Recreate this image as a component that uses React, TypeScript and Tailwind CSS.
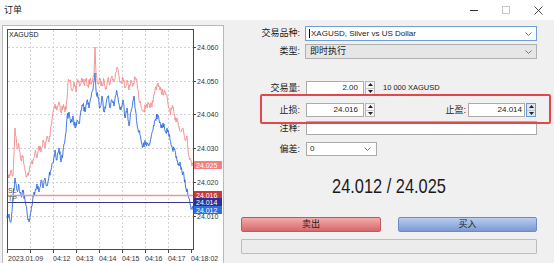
import React from "react";

const FONT = "font-['Liberation_Sans','Noto_Sans_CJK_SC',sans-serif]";

function rng(seed: number) {
  let s = seed;
  return () => {
    s = (s * 16807) % 2147483647;
    return (s - 1) / 2147483646;
  };
}

function jagged(keys: number[][], seed: number, amp: number) {
  const r = rng(seed);
  let d = `M${keys[0][0]},${keys[0][1]}`;
  for (let i = 1; i < keys.length; i++) {
    const [x0, y0] = keys[i - 1];
    const [x1, y1] = keys[i];
    const steps = Math.max(1, Math.round((x1 - x0) * 2));
    for (let s = 1; s <= steps; s++) {
      const t = s / steps;
      const x = x0 + (x1 - x0) * t;
      const y = y0 + (y1 - y0) * t + (s < steps ? (r() - 0.5) * amp : 0);
      d += ` L${x.toFixed(1)},${y.toFixed(1)}`;
    }
  }
  return d;
}

const RED: number[][] = [
  [7, 172], [9, 178], [11, 170], [13, 176], [15, 128], [17, 148], [19, 146], [21, 160], [23, 156], [25, 170],
  [27, 176], [29, 172], [31, 164], [33, 160], [35, 152], [37, 158], [39, 146], [41, 152], [43, 140], [45, 148],
  [47, 136], [49, 142], [51, 126], [53, 112], [55, 104], [57, 110], [59, 102], [61, 112], [63, 106], [65, 112],
  [67, 100], [68, 82], [70, 80], [72, 90], [74, 82], [76, 92], [78, 80], [80, 86], [82, 78], [84, 84], [86, 80],
  [88, 86], [90, 80], [92, 82], [94, 76], [95, 47], [96, 74], [98, 84], [100, 80], [102, 86], [104, 80], [106, 88],
  [108, 78], [110, 84], [112, 76], [114, 82], [116, 72], [117, 67], [119, 76], [121, 82], [123, 78], [125, 88],
  [127, 80], [129, 90], [131, 80], [133, 86], [135, 78], [137, 82], [139, 100], [141, 106], [144, 110], [147, 104],
  [150, 108], [153, 102], [155, 90], [158, 83], [160, 90], [163, 92], [166, 94], [168, 104], [170, 112], [173, 108],
  [175, 120], [177, 118], [179, 126], [181, 132], [183, 128], [185, 140], [187, 136], [188, 150], [190, 158], [193, 165],
];

const BLUE: number[][] = [
  [7, 218], [9, 214], [11, 222], [13, 196], [15, 178], [17, 190], [19, 186], [21, 195], [23, 192], [25, 200],
  [27, 212], [29, 222], [31, 212], [33, 196], [35, 192], [37, 184], [39, 192], [41, 180], [43, 188], [45, 178],
  [47, 186], [49, 176], [51, 170], [53, 162], [55, 150], [57, 160], [59, 148], [61, 162], [63, 152], [65, 140],
  [67, 118], [69, 112], [71, 122], [73, 116], [75, 128], [77, 120], [79, 124], [81, 110], [83, 104], [85, 112],
  [87, 100], [89, 108], [91, 98], [93, 90], [94, 82], [95, 73], [96, 90], [98, 98], [100, 108], [102, 96],
  [104, 112], [106, 104], [108, 96], [110, 108], [112, 100], [114, 106], [116, 95], [117, 92], [119, 104],
  [121, 110], [123, 100], [125, 118], [127, 108], [129, 126], [131, 112], [133, 100], [134, 96], [135, 108],
  [137, 124], [139, 132], [141, 140], [143, 146], [146, 142], [149, 146], [151, 138], [153, 130], [155, 120],
  [158, 115], [160, 122], [162, 128], [164, 124], [166, 132], [168, 130], [170, 140], [172, 146], [174, 150],
  [176, 158], [178, 165], [180, 162], [182, 172], [184, 176], [186, 188], [188, 196], [190, 204], [192, 208], [193, 210],
];

const LEVELS: [number, string][] = [
  [47, "24.060"],
  [81, "24.050"],
  [114, "24.040"],
  [148, "24.030"],
  [182, "24.020"],
  [216, "24.010"],
];

const VGRID = [30, 53, 76, 99, 122, 145, 168];

const TIMES: [number, string][] = [
  [8, "2023.01.09"],
  [53, "04:12"],
  [76, "04:13"],
  [99, "04:14"],
  [122, "04:15"],
  [145, "04:16"],
  [168, "04:17"],
  [191, "04:18:02"],
];

const TAGS: { y: number; v: string; bg: string }[] = [
  { y: 165, v: "24.025", bg: "#f47f7f" },
  { y: 195, v: "24.016", bg: "#c53b3b" },
  { y: 202, v: "24.014", bg: "#2e2e94" },
  { y: 210, v: "24.012", bg: "#2d6fe3" },
];

function Chart() {
  const red = jagged(RED, 7, 7);
  const blue = jagged(BLUE, 13, 7);
  return (
    <svg width={220} height={243} viewBox="3 26 220 243" className="block">
      {LEVELS.map(([y]) => (
        <line key={`h${y}`} x1={8} x2={193} y1={y + 0.5} y2={y + 0.5} stroke="#d2d2d2" strokeDasharray="2 2" />
      ))}
      {VGRID.map((x) => (
        <line key={`v${x}`} x1={x + 0.5} x2={x + 0.5} y1={30} y2={249} stroke="#d2d2d2" strokeDasharray="2 2" />
      ))}
      <path d={red} fill="none" stroke="#f28a8a" strokeWidth={0.9} strokeLinejoin="miter" />
      <path d={blue} fill="none" stroke="#2d6be0" strokeWidth={0.9} strokeLinejoin="miter" />
      <line x1={8} x2={193} y1={195.5} y2={195.5} stroke="#e39a9a" strokeWidth={1.4} />
      <line x1={8} x2={193} y1={202.5} y2={202.5} stroke="#35358c" strokeWidth={1} />
      <text x={8} y={190} fontSize={7} fill="#555" dominantBaseline="central">SL</text>
      <text x={8} y={198} fontSize={7} fill="#555" dominantBaseline="central">TP</text>
      <rect x={7.5} y={29.5} width={186} height={220} fill="none" stroke="#4a4a4a" />
      <text x={9} y={34} fontSize={7} fill="#222" dominantBaseline="central">XAGUSD</text>
      {LEVELS.map(([y, v]) => (
        <g key={`l${y}`}>
          <line x1={193} x2={196} y1={y + 0.5} y2={y + 0.5} stroke="#4a4a4a" />
          <text x={197} y={y + 0.5} fontSize={7} fill="#333" dominantBaseline="central">{v}</text>
        </g>
      ))}
      {TAGS.map((t) => (
        <g key={t.v}>
          <rect x={194} y={t.y - 4} width={28} height={8} fill={t.bg} />
          <text x={196} y={t.y + 0.3} fontSize={7} fill="#ffffff" dominantBaseline="central">{t.v}</text>
        </g>
      ))}
      {[7, ...VGRID, 191].map((x) => (
        <line key={`t${x}`} x1={x + 0.5} x2={x + 0.5} y1={250} y2={253} stroke="#4a4a4a" />
      ))}
      {TIMES.map(([x, v]) => (
        <text key={v} x={x} y={258} fontSize={7} fill="#333" dominantBaseline="central">{v}</text>
      ))}
    </svg>
  );
}

function Chevron() {
  return (
    <svg width="7" height="4" viewBox="0 0 7 4">
      <path d="M0.5 0.5 L3.5 3.5 L6.5 0.5" fill="none" stroke="#6a6a6a" strokeWidth="0.9" />
    </svg>
  );
}

function Spin({ active = false }: { active?: boolean }) {
  return (
    <div
      className={`ml-[1px] flex h-full w-[10px] flex-col border ${
        active ? "border-[#6f9ad6] bg-[#dae7f6]" : "border-[#b7b7b7] bg-[#f6f6f6]"
      }`}
    >
      <div className="flex flex-1 items-center justify-center border-b border-[#c8c8c8]">
        <svg width="5" height="3" viewBox="0 0 5 3">
          <path d="M0 3 L2.5 0 L5 3Z" fill="#222" />
        </svg>
      </div>
      <div className="flex flex-1 items-center justify-center">
        <svg width="5" height="3" viewBox="0 0 5 3">
          <path d="M0 0 L2.5 3 L5 0Z" fill="#222" />
        </svg>
      </div>
    </div>
  );
}

function Label({ children }: { children: React.ReactNode }) {
  return <div className="flex w-[76px] justify-end text-[9px] leading-none text-[#1b1b1b]">{children}</div>;
}

function RightPanel() {
  return (
    <div className="flex w-[330px] flex-col pt-[6px]">
      <div className="flex h-[15px] items-center">
        <Label>交易品种:</Label>
        <div className="ml-[5px] flex h-full w-[232px] items-center border border-[#6f9fd8] bg-white pl-[3px] pr-[4px]">
          <div className="mr-[1px] h-[9px] w-px bg-[#111]" />
          <span className="text-[8px] leading-none">XAGUSD, Silver vs US Dollar</span>
          <div className="ml-auto flex items-center">
            <Chevron />
          </div>
        </div>
      </div>
      <div className="mt-[3px] flex h-[15px] items-center">
        <Label>类型:</Label>
        <div className="ml-[5px] flex h-full w-[232px] items-center border border-[#b0b0b0] bg-[#e6e6e6] pl-[4px] pr-[4px]">
          <span className="text-[9px] leading-none">即时执行</span>
          <div className="ml-auto flex items-center">
            <Chevron />
          </div>
        </div>
      </div>
      <div className="mt-[22px] flex h-[14px] items-center">
        <Label>交易量:</Label>
        <div className="ml-[6px] flex h-full w-[58px] items-center justify-end border border-[#ababab] bg-white pr-[5px] text-[8px] leading-none">
          2.00
        </div>
        <Spin />
        <span className="ml-[8px] text-[7.5px] leading-none">10 000 XAGUSD</span>
      </div>
      <div className="mt-[8px] flex h-[14px] items-center">
        <Label>止损:</Label>
        <div className="ml-[6px] flex h-full w-[58px] items-center justify-end border border-[#ababab] bg-white pr-[5px] text-[8px] leading-none">
          24.016
        </div>
        <Spin />
        <div className="ml-[67px] flex w-[24px] justify-end text-[9px] leading-none">止盈:</div>
        <div className="ml-[2px] flex h-full w-[57px] items-center justify-end border border-[#ababab] bg-white pr-[2px] text-[8px] leading-none">
          24.014
        </div>
        <Spin active />
      </div>
      <div className="mt-[4px] flex h-[14px] items-center">
        <Label>注释:</Label>
        <div className="ml-[6px] h-full w-[231px] border border-[#ababab] bg-white" />
      </div>
      <div className="mt-[7px] flex h-[14px] items-center">
        <Label>偏差:</Label>
        <div className="ml-[6px] flex h-full w-[71px] items-center border border-[#ababab] bg-white pl-[3px] pr-[5px]">
          <span className="text-[8px] leading-none">0</span>
          <div className="ml-auto flex items-center">
            <Chevron />
          </div>
        </div>
      </div>
      <div className="mt-[19px] flex h-[20px] items-center justify-center">
        <span className="inline-block origin-center scale-x-[0.78] text-[21px] leading-none text-[#1a1a1a]">
          24.012 / 24.025
        </span>
      </div>
      <div className="mt-[22px] ml-[17px] flex h-[15px] gap-[17px]">
        <div className="flex h-full w-[140px] items-center justify-center rounded-[2px] border border-[#bf5a5c] bg-linear-to-b from-[#f5aaaa] to-[#d4696b] text-[9px] leading-none text-[#222]">
          卖出
        </div>
        <div className="flex h-full w-[139px] items-center justify-center rounded-[2px] border border-[#6f8cc2] bg-linear-to-b from-[#b8cdf1] to-[#7c99d0] text-[9px] leading-none text-[#222]">
          买入
        </div>
      </div>
      <div className="mt-[7px] ml-[17px] h-[15px] w-[296px] rounded-[1px] border border-[#bdbdbd] bg-[#ececec]" />
    </div>
  );
}

function TitleBar() {
  return (
    <div className="flex h-[20px] items-center bg-white">
      <span className="ml-[4px] text-[9px] leading-none text-[#222]">订单</span>
      <div className="ml-auto flex h-full">
        <div className="flex w-[32px] items-center justify-center">
          <div className="h-px w-[8px] bg-[#333]" />
        </div>
        <div className="flex w-[32px] items-center justify-center">
          <div className="h-[8px] w-[8px] border border-[#c6c6c6]" />
        </div>
        <div className="flex w-[32px] items-center justify-center">
          <svg width="9" height="9" viewBox="0 0 9 9">
            <path d="M0.5 0.5 L8.5 8.5 M8.5 0.5 L0.5 8.5" stroke="#333" strokeWidth="0.9" />
          </svg>
        </div>
      </div>
    </div>
  );
}

export default function App() {
  return (
    <div className={`relative h-[263px] w-[554px] overflow-hidden bg-[#f0f0f0] text-[#1b1b1b] ${FONT}`}>
      <TitleBar />
      <div className="flex">
        <div className="ml-[2px] mt-[5px] h-[245px] w-[222px] border border-[#b9b9b9] bg-white">
          <Chart />
        </div>
        <RightPanel />
      </div>
      <div className="absolute left-[260px] top-[94px] h-[30px] w-[291px] rounded-[2px] border-2 border-[#e2474b]" />
    </div>
  );
}
